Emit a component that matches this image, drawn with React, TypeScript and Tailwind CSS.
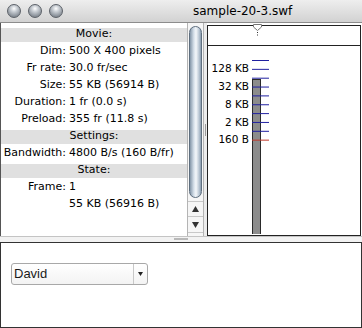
const rows = [
  { type: "head", text: "Movie:" },
  { type: "row", label: "Dim:", value: "500 X 400 pixels" },
  { type: "row", label: "Fr rate:", value: "30.0 fr/sec" },
  { type: "row", label: "Size:", value: "55 KB (56914 B)" },
  { type: "row", label: "Duration:", value: "1 fr (0.0 s)" },
  { type: "row", label: "Preload:", value: "355 fr (11.8 s)" },
  { type: "head", text: "Settings:" },
  { type: "row", label: "Bandwidth:", value: "4800 B/s (160 B/fr)" },
  { type: "head", text: "State:" },
  { type: "row", label: "Frame:", value: "1" },
  { type: "row", label: "", value: "55 KB (56916 B)" },
];

const labels = ["128 KB", "32 KB", "8 KB", "2 KB", "160 B"];

const TrafficLight = () => (
  <div className="h-[14px] w-[14px] rounded-full border border-[#5c6168] bg-[radial-gradient(circle_at_50%_30%,#ffffff_0%,#c9ced4_30%,#8e959d_70%,#6c737b_100%)]" />
);

const App = () => {
  return (
    <main className="w-[362px] h-[328px] bg-white font-['DejaVu_Sans',sans-serif] text-black overflow-hidden">
      {/* title bar */}
      <div className="flex items-center h-[23px] border-b border-[#8c8c8c] bg-[linear-gradient(#eeeeee,#d2d2d2)]">
        <div className="flex gap-[7px] pl-[7px]">
          <TrafficLight />
          <TrafficLight />
          <TrafficLight />
        </div>
        <span className="ml-[130px] text-[12px] leading-none">sample-20-3.swf</span>
      </div>

      {/* upper area */}
      <div className="flex h-[213px] border-l border-[#555]">
        {/* info panel */}
        <div className="w-[186px] pt-[3px] text-[11px]">
          {rows.map((r, i) =>
            r.type === "head" ? (
              <div key={i} className="flex h-[17px] items-center">
                <div className="flex h-[14px] w-full items-center justify-center bg-[#e0e0e0]">{r.text}</div>
              </div>
            ) : (
              <div key={i} className="flex h-[17px] items-center">
                <span className="w-[65px] text-right">{r.label}</span>
                <span className="ml-[3px] whitespace-nowrap">{r.value}</span>
              </div>
            )
          )}
        </div>

        {/* scrollbar */}
        <div className="flex w-[17px] flex-col border-x border-[#b4b4b4] bg-[#f6f6f6]">
          <div className="mx-[1px] mt-[3px] h-[172px] rounded-full border border-[#5e6e7e] bg-[linear-gradient(to_right,#8496a8,#d6e0ea_35%,#f4f7fa_55%,#b4c2d0_85%,#8799ab)]" />
          <div className="mt-[3px] flex h-[16px] items-center justify-center border-y border-[#c8c8c8]">
            <svg width="7" height="6" viewBox="0 0 7 6"><polygon points="3.5,0 7,6 0,6" fill="#333" /></svg>
          </div>
          <div className="flex h-[16px] items-center justify-center border-b border-[#c8c8c8]">
            <svg width="7" height="6" viewBox="0 0 7 6"><polygon points="0,0 7,0 3.5,6" fill="#333" /></svg>
          </div>
        </div>

        {/* vertical splitter */}
        <div className="flex w-[3px] items-center justify-center bg-[#ececec]">
          <div className="h-[12px] w-[1px] bg-[#999]" />
        </div>

        {/* right panel */}
        <div className="mt-[2px] flex flex-1 flex-col border border-[#222] border-b-0 mr-[1px]">
          <div className="h-[20px] border-b border-[#222]">
            <svg width="9" height="12" viewBox="0 0 9 12" className="ml-[45px] -mt-[2px]">
              <polygon points="0.5,0.5 8.5,0.5 8.5,3 4.5,6.5 0.5,3" fill="#fff" stroke="#777" />
              <rect x="4" y="8" width="1" height="1" fill="#333" />
              <rect x="4" y="10.5" width="1" height="1" fill="#333" />
            </svg>
          </div>
          <div className="flex flex-1 border-b border-[#222]">
            <div className="w-[41px] pt-[14.5px] text-[10.5px]">
              {labels.map((l) => (
                <div key={l} className="flex h-[17.7px] items-center justify-end whitespace-nowrap">{l}</div>
              ))}
            </div>
            <svg width="24" height="188" viewBox="0 0 24 188" className="block">
              <rect x="3.5" y="33.5" width="8" height="160" fill="#8c8c8c" stroke="#2a2a2a" />
              {Array.from({ length: 10 }).map((_, i) => (
                <line key={i} x1="3" x2="20" y1={14.5 + i * 8.85} y2={14.5 + i * 8.85} stroke={i === 9 ? "#c0392b" : "#2020a0"} strokeWidth="1" />
              ))}
            </svg>
          </div>
        </div>
      </div>

      {/* horizontal splitter */}
      <div className="flex h-[6px] justify-center border-t border-[#c4c4c4] bg-[#f2f2f2]">
        <div className="mt-[1px] h-[2px] w-[14px] bg-[#b8b8b8]" />
      </div>

      {/* lower panel */}
      <div className="h-[86px] border-x border-y border-[#333] bg-white pl-[10px] pt-[20px]">
        <div className="flex h-[22px] w-[137px] items-center rounded-[3px] border border-[#a8a8a8] bg-[linear-gradient(#ffffff,#f3f3f3)] font-['Liberation_Sans',sans-serif] text-[13px] text-[#1a1a1a]">
          <span className="flex-1 pl-[2px]">David</span>
          <div className="flex h-full w-[14px] items-center justify-center border-l border-[#c8c8c8]">
            <svg width="5" height="4" viewBox="0 0 5 4"><polygon points="0,0 5,0 2.5,4" fill="#222" /></svg>
          </div>
        </div>
      </div>
    </main>
  );
};

export default App;
